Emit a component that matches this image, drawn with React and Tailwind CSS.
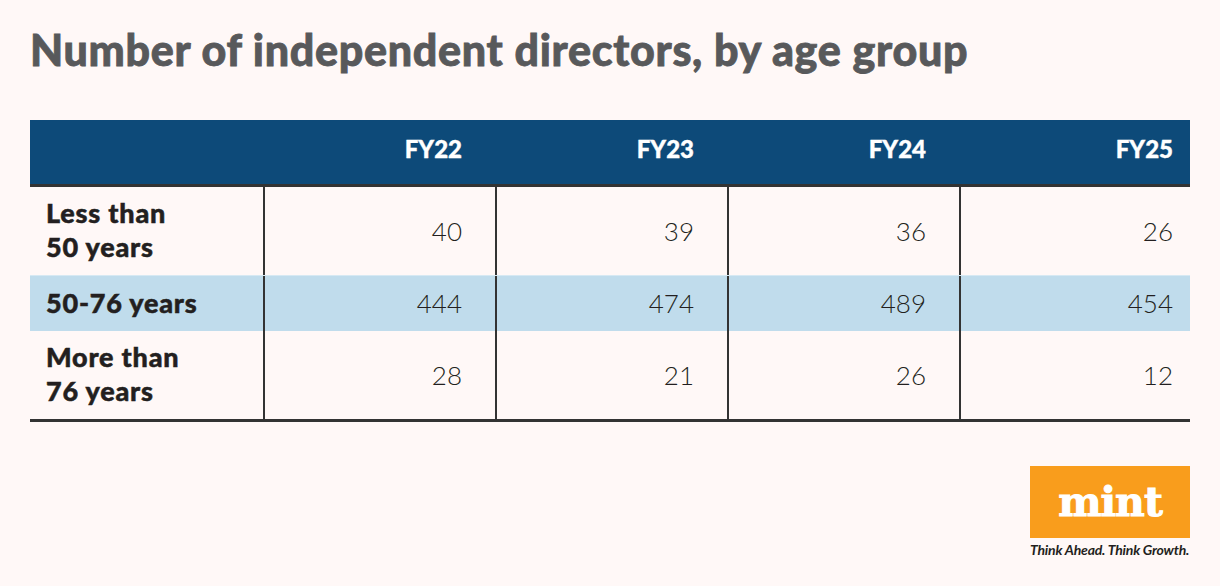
const rows = [
  { label: ['Less than', '50 years'], values: ['40', '39', '36', '26'], tall: true },
  { label: ['50-76 years'], values: ['444', '474', '489', '454'], shaded: true },
  { label: ['More than', '76 years'], values: ['28', '21', '26', '12'], tall: true },
];

const years = ['FY22', 'FY23', 'FY24', 'FY25'];

const App = () => {
  return (
    <div className="h-[586px] w-[1220px] bg-[#fff8f7] font-['Lato',sans-serif] px-[30px] pt-[25px]">
      {/* title */}
      <h1 className="text-[43px] leading-[50px] font-black tracking-[0.7px] text-[#58595b] [-webkit-text-stroke:0.8px_#58595b]">
        Number of independent directors, by age group
      </h1>

      {/* table */}
      <div className="mt-[45px] w-[1160px]">
        <div className="grid h-[64px] grid-cols-[233px_232px_232px_232px_231px] bg-[#0d4a79] pt-[17px]">
          <div />
          {years.map((y, i) => (
            <div
              key={y}
              className={`text-right text-[24px] leading-[24px] font-black text-white [-webkit-text-stroke:0.4px_#fff] ${
                i === 3 ? 'pr-[17px]' : 'pr-[33px]'
              }`}>
              {y}
            </div>
          ))}
        </div>
        <div className="border-y-[3px] border-[#333]">
          {rows.map((row, r) => (
            <div
              key={r}
              className={`grid grid-cols-[233px_232px_232px_232px_231px] ${
                row.tall ? 'h-[88px]' : 'h-[56px] border-t border-[#d7e9f3]'
              } ${row.shaded ? 'bg-[#c0dcec]' : ''}`}>
              <div className="flex flex-col justify-center pb-[2px] pl-[16px] text-[27px] leading-[34px] font-black tracking-[0.8px] text-[#231f20] [-webkit-text-stroke:0.5px_#231f20]">
                {row.label.map((l) => (
                  <span key={l}>{l}</span>
                ))}
              </div>
              {row.values.map((v, i) => (
                <div
                  key={i}
                  className={`flex items-center justify-end border-l-2 border-[#333] text-[26px] font-light text-[#231f20] ${
                    i === 3 ? 'pr-[17px]' : 'pr-[33px]'
                  }`}>
                  {v}
                </div>
              ))}
            </div>
          ))}
        </div>
      </div>

      {/* mint logo */}
      <div className="mt-[44px] flex justify-end">
        <div className="flex w-[160px] flex-col items-stretch">
          <div className="flex h-[72px] items-center justify-center bg-[#f99d1c]">
            <span className="font-['DejaVu_Serif',serif] text-[41px] leading-none font-bold tracking-[-1px] text-white [-webkit-text-stroke:1px_#fff]">
              mint
            </span>
          </div>
          <span className="mt-[4px] text-[14px] leading-[16px] font-bold italic tracking-[-0.2px] text-[#231f20]">
            Think Ahead. Think Growth.
          </span>
        </div>
      </div>
    </div>
  );
};

export default App;
